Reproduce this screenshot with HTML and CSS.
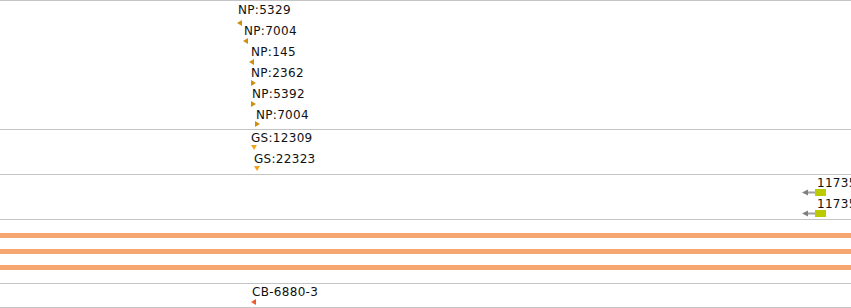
FILE: index.html
```html
<!DOCTYPE html>
<html>
<head>
<meta charset="utf-8">
<link rel="stylesheet" href="styles.css">
</head>
<body>
<div class="browser">
  <section class="track track-np">
    <span class="label" style="left:238px;top:2px">NP:5329</span>
    <svg class="mk np" style="left:237px;top:19px" width="5" height="6" viewBox="0 0 5 6"><polygon points="0,3 5,0 5,6"/></svg>
    <span class="label" style="left:244px;top:23px">NP:7004</span>
    <svg class="mk np" style="left:243px;top:37px" width="5" height="6" viewBox="0 0 5 6"><polygon points="0,3 5,0 5,6"/></svg>
    <span class="label" style="left:251px;top:44px">NP:145</span>
    <svg class="mk np" style="left:249px;top:58px" width="5" height="6" viewBox="0 0 5 6"><polygon points="0,3 5,0 5,6"/></svg>
    <span class="label" style="left:251px;top:65px">NP:2362</span>
    <svg class="mk np" style="left:251px;top:79px" width="5" height="6" viewBox="0 0 5 6"><polygon points="5,3 0,0 0,6"/></svg>
    <span class="label" style="left:252px;top:86px">NP:5392</span>
    <svg class="mk np" style="left:251px;top:100px" width="5" height="6" viewBox="0 0 5 6"><polygon points="5,3 0,0 0,6"/></svg>
    <span class="label" style="left:256px;top:107px">NP:7004</span>
    <svg class="mk np" style="left:255px;top:120px" width="5" height="6" viewBox="0 0 5 6"><polygon points="5,3 0,0 0,6"/></svg>
  </section>
  <section class="track track-gs">
    <span class="label" style="left:251px;top:1px">GS:12309</span>
    <svg class="mk gs" style="left:251px;top:15px" width="6" height="5" viewBox="0 0 6 5"><polygon points="0,0 6,0 3,5"/></svg>
    <span class="label" style="left:254px;top:22px">GS:22323</span>
    <svg class="mk gs" style="left:254px;top:36px" width="6" height="5" viewBox="0 0 6 5"><polygon points="0,0 6,0 3,5"/></svg>
  </section>
  <section class="track track-gene">
    <span class="label" style="left:817px;top:1px">11735</span>
    <svg class="mk gene" style="left:802px;top:14px" width="24" height="7" viewBox="0 0 24 7"><polygon class="head" points="0,3.5 6,0.5 6,6.5"/><rect class="shaft" x="6" y="2.5" width="7" height="2"/><rect class="box" x="13" y="0" width="11" height="7"/></svg>
    <span class="label" style="left:817px;top:22px">11735</span>
    <svg class="mk gene" style="left:802px;top:35px" width="24" height="7" viewBox="0 0 24 7"><polygon class="head" points="0,3.5 6,0.5 6,6.5"/><rect class="shaft" x="6" y="2.5" width="7" height="2"/><rect class="box" x="13" y="0" width="11" height="7"/></svg>
  </section>
  <section class="track track-bars">
    <div class="bar"></div>
    <div class="bar"></div>
    <div class="bar"></div>
  </section>
  <section class="track track-cb">
    <span class="label" style="left:252px;top:1px">CB-6880-3</span>
    <svg class="mk cb" style="left:251px;top:15px" width="5" height="6" viewBox="0 0 5 6"><polygon points="0,3 5,0 5,6"/></svg>
  </section>
</div>
</body>
</html>
```
FILE: styles.css
```css
html, body {
  margin: 0;
  padding: 0;
  background: #ffffff;
}
body {
  width: 851px;
  height: 308px;
  overflow: hidden;
  font-family: "DejaVu Sans", "Liberation Sans", sans-serif;
  font-size: 12px;
  line-height: 14px;
  letter-spacing: 0.3px;
  color: #111111;
}
.browser {
  display: flex;
  flex-direction: column;
  width: 851px;
}
.track {
  position: relative;
  border-top: 1px solid #c4c4c4;
  box-sizing: border-box;
  overflow: hidden;
}
.track-np { height: 129px; }
.track-gs { height: 45px; }
.track-gene { height: 45px; }
.track-bars {
  height: 64px;
  display: flex;
  flex-direction: column;
  gap: 11px;
  padding-top: 13px;
}
.track-cb {
  height: 25px;
  border-bottom: 1px solid #c4c4c4;
}
.label {
  position: absolute;
  white-space: nowrap;
}
.mk {
  position: absolute;
  display: block;
}
.np polygon { fill: #cf8f0e; }
.gs polygon { fill: #f2a41c; }
.cb polygon { fill: #ee5a2a; }
.gene .head { fill: #808080; }
.gene .shaft { fill: #a0a0a0; }
.gene .box { fill: #bccb00; }
.bar {
  height: 5px;
  background: #f5a672;
  flex: none;
}
```
